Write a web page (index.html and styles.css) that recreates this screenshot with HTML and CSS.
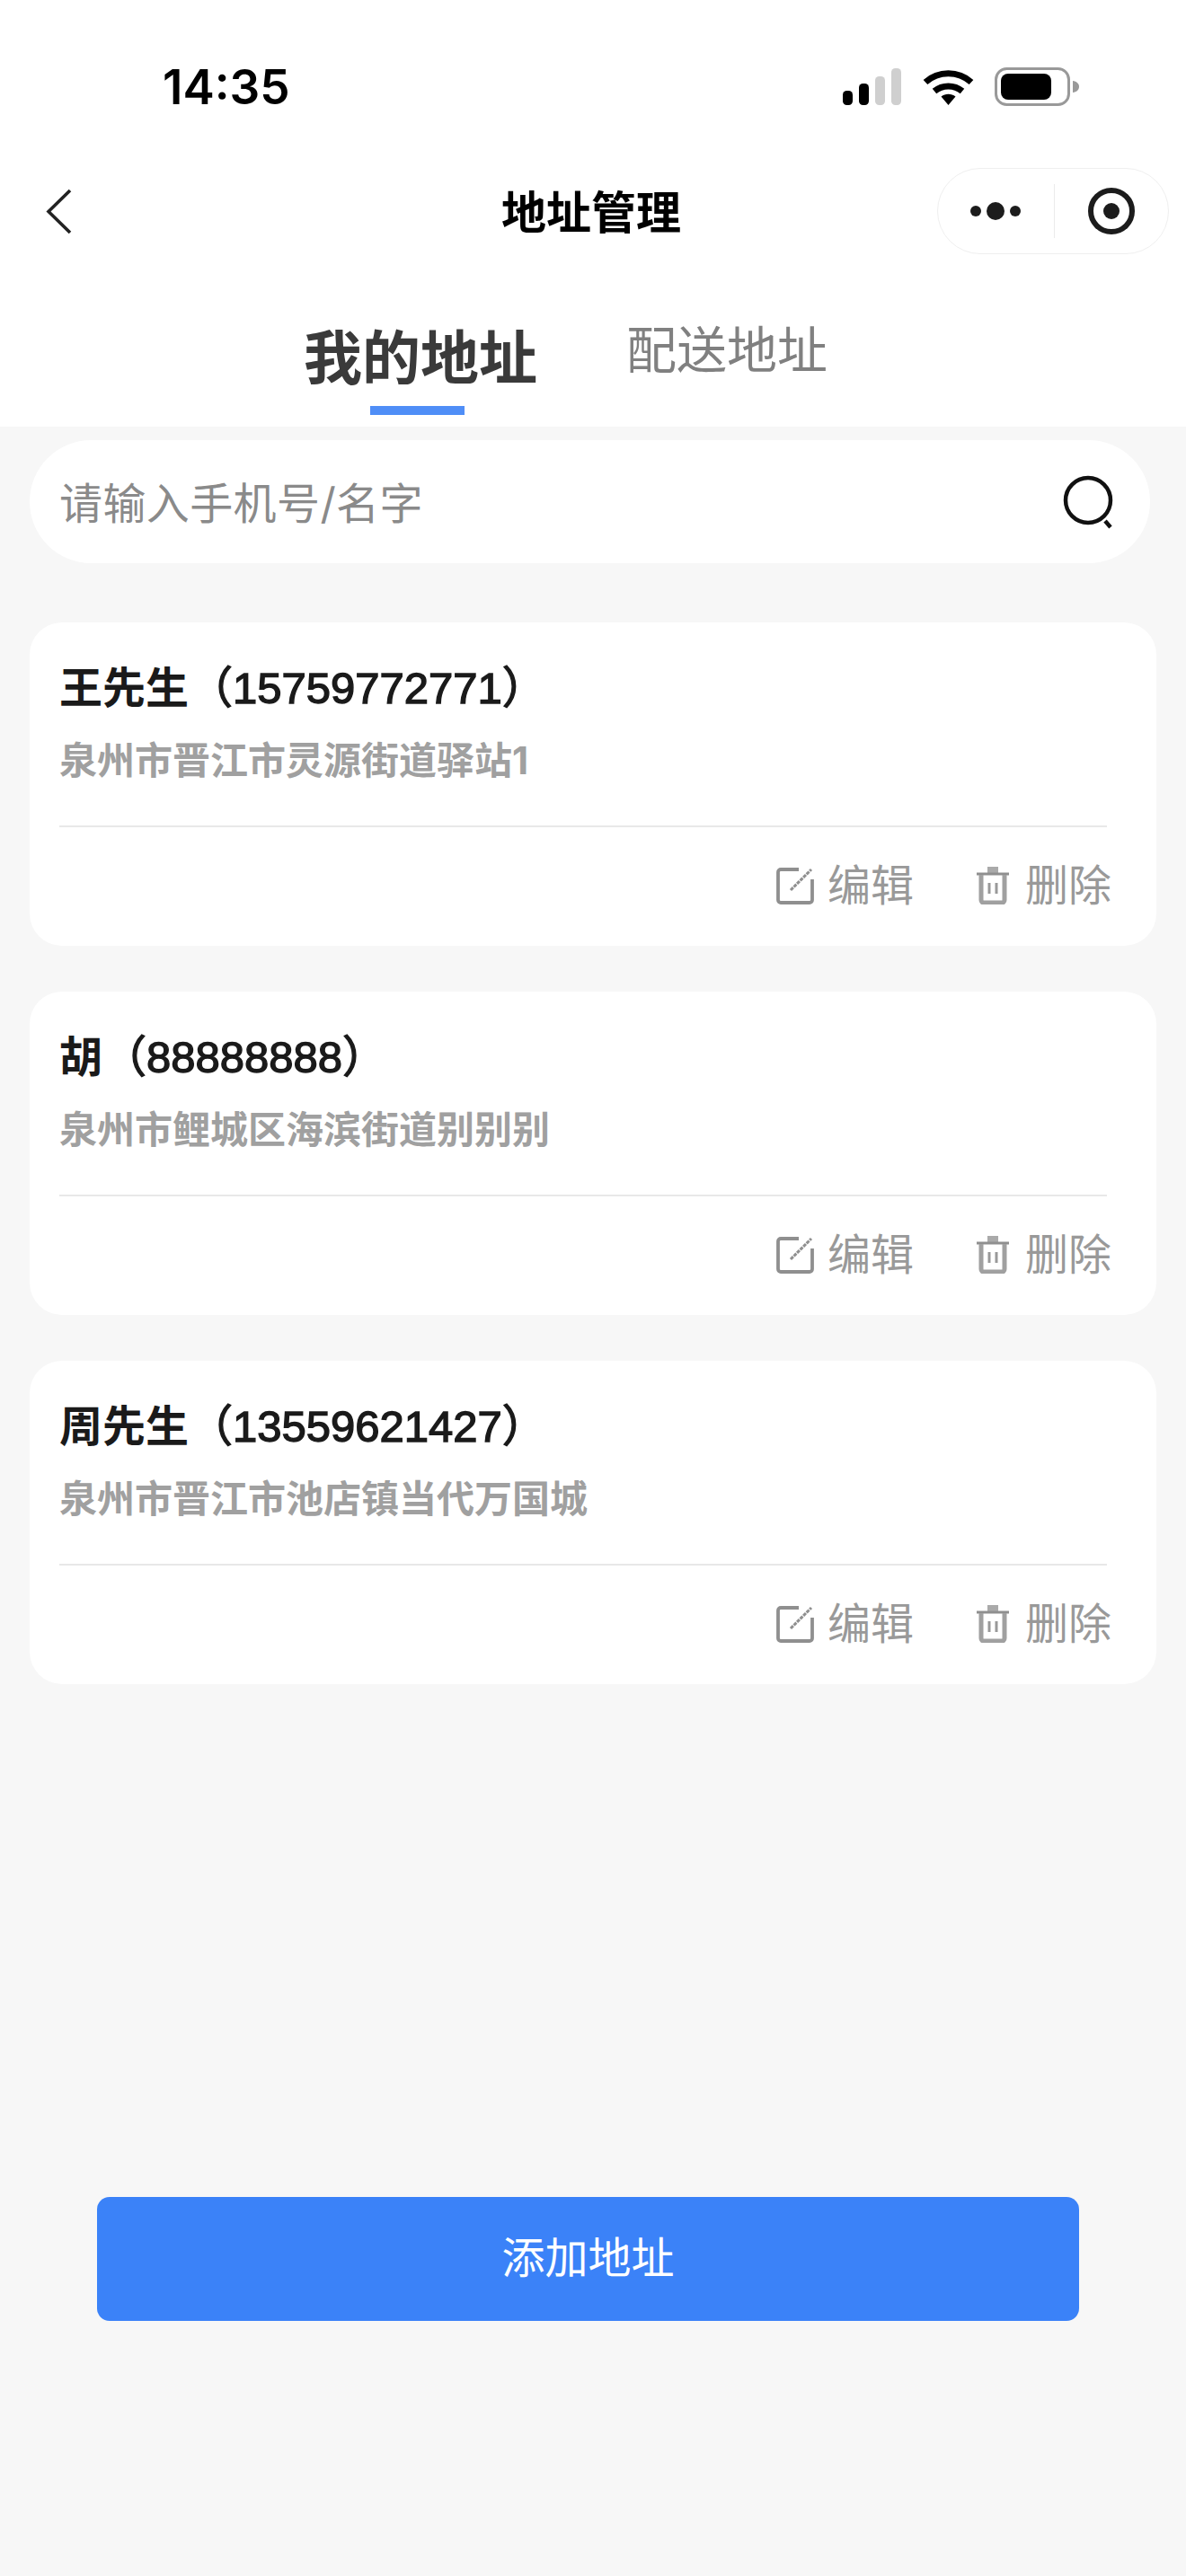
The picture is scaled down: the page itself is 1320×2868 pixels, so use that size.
FILE: index.html
```html
<!DOCTYPE html>
<html lang="zh-CN">
<head>
    <meta charset="UTF-8">
    <meta name="viewport" content="width=device-width, initial-scale=1.0">
    <title>地址管理</title>
    <link rel="stylesheet" href="styles.css">
</head>
<body>
    <header class="page-header">
        <div class="status-bar">
            <span class="status-time">14:35</span>
            <div class="status-icons">
                <svg class="icon-signal" viewBox="0 0 65 41">
                    <rect x="0" y="25" width="11" height="16" rx="4.5" fill="#000"/>
                    <rect x="18" y="17" width="11" height="24" rx="4.5" fill="#000"/>
                    <rect x="36" y="9" width="11" height="32" rx="4.5" fill="#cfcfcf"/>
                    <rect x="54" y="0" width="11" height="41" rx="4.5" fill="#cfcfcf"/>
                </svg>
                <svg class="icon-wifi" viewBox="0 0 57 42">
                    <path d="M28.5 42l-8-9.5c4.6-3.6 11.4-3.6 16 0z" fill="#000"/>
                    <path d="M3 16.500C17.500 3.500 39.500 3.500 54 16.500" fill="none" stroke="#000" stroke-width="7"/>
                    <path d="M13 26.500c9-7.500 22-7.500 31 0" fill="none" stroke="#000" stroke-width="7"/>
                </svg>
                <svg class="icon-battery" viewBox="0 0 94 43">
                    <rect x="1.500" y="1.500" width="81" height="40" rx="12" fill="none" stroke="#999" stroke-width="3"/>
                    <rect x="7" y="7" width="56" height="29" rx="8" fill="#000"/>
                    <path d="M87 15c4 .5 7 3 7 6.500s-3 6-7 6.500z" fill="#999"/>
                </svg>
            </div>
        </div>
        <nav class="nav-bar">
            <svg class="icon-back" viewBox="0 0 29 51">
                <path d="M27 2L3 25.500 27 49" fill="none" stroke="#222" stroke-width="3.600"/>
            </svg>
            <h1 class="nav-title">地址管理</h1>
            <div class="capsule">
                <svg class="icon-more" viewBox="0 0 56 20">
                    <circle cx="6" cy="10" r="6" fill="#1c1c1c"/>
                    <circle cx="28" cy="10" r="10" fill="#1c1c1c"/>
                    <circle cx="50" cy="10" r="6" fill="#1c1c1c"/>
                </svg>
                <span class="capsule-line"></span>
                <svg class="icon-target" viewBox="0 0 52 52">
                    <circle cx="26" cy="26" r="23" fill="none" stroke="#1c1c1c" stroke-width="6"/>
                    <circle cx="26" cy="26" r="9" fill="#1c1c1c"/>
                </svg>
            </div>
        </nav>
        <div class="tabs">
            <div class="tab tab-active">我的地址</div>
            <div class="tab">配送地址</div>
        </div>
    </header>

    <div class="search-box">
        <span class="search-text">请输入手机号/名字</span>
        <svg class="icon-search" viewBox="0 0 58 60">
            <circle cx="28" cy="28" r="25" fill="none" stroke="#111" stroke-width="4.500"/>
            <path d="M47 51l6 7" fill="none" stroke="#111" stroke-width="4.500"/>
        </svg>
    </div>

    <main class="address-list">
        <div class="address-card">
            <div class="address-name">王先生<span class="phone">（15759772771）</span></div>
            <div class="address-detail">泉州市晋江市灵源街道驿站1</div>
            <div class="address-actions">
                <div class="action">
                    <svg class="icon-edit" viewBox="0 0 42 42">
                        <path d="M25 3H5a3 3 0 0 0-3 3v31a3 3 0 0 0 3 3h32a3 3 0 0 0 3-3V14" fill="none" stroke="#8f8f8f" stroke-width="3.800"/>
                        <path d="M16 26L39 3" fill="none" stroke="#8f8f8f" stroke-width="3" stroke-dasharray="4 1"/>
                    </svg>
                    <span>编辑</span>
                </div>
                <div class="action action-delete">
                    <svg class="icon-trash" viewBox="0 0 36 42">
                        <rect x="12" y="0" width="12" height="7" fill="#aaa"/>
                        <path d="M0 8h36" fill="none" stroke="#8f8f8f" stroke-width="3"/>
                        <path d="M5 9v28a3 3 0 0 0 3 3h20a3 3 0 0 0 3-3V9" fill="none" stroke="#a0a0a0" stroke-width="5"/>
                        <path d="M14 18v12M22 18v12" fill="none" stroke="#999" stroke-width="3"/>
                    </svg>
                    <span>删除</span>
                </div>
            </div>
        </div>

        <div class="address-card">
            <div class="address-name">胡<span class="phone">（88888888）</span></div>
            <div class="address-detail">泉州市鲤城区海滨街道别别别</div>
            <div class="address-actions">
                <div class="action">
                    <svg class="icon-edit" viewBox="0 0 42 42">
                        <path d="M25 3H5a3 3 0 0 0-3 3v31a3 3 0 0 0 3 3h32a3 3 0 0 0 3-3V14" fill="none" stroke="#8f8f8f" stroke-width="3.800"/>
                        <path d="M16 26L39 3" fill="none" stroke="#8f8f8f" stroke-width="3" stroke-dasharray="4 1"/>
                    </svg>
                    <span>编辑</span>
                </div>
                <div class="action action-delete">
                    <svg class="icon-trash" viewBox="0 0 36 42">
                        <rect x="12" y="0" width="12" height="7" fill="#aaa"/>
                        <path d="M0 8h36" fill="none" stroke="#8f8f8f" stroke-width="3"/>
                        <path d="M5 9v28a3 3 0 0 0 3 3h20a3 3 0 0 0 3-3V9" fill="none" stroke="#a0a0a0" stroke-width="5"/>
                        <path d="M14 18v12M22 18v12" fill="none" stroke="#999" stroke-width="3"/>
                    </svg>
                    <span>删除</span>
                </div>
            </div>
        </div>

        <div class="address-card">
            <div class="address-name">周先生<span class="phone">（13559621427）</span></div>
            <div class="address-detail">泉州市晋江市池店镇当代万国城</div>
            <div class="address-actions">
                <div class="action">
                    <svg class="icon-edit" viewBox="0 0 42 42">
                        <path d="M25 3H5a3 3 0 0 0-3 3v31a3 3 0 0 0 3 3h32a3 3 0 0 0 3-3V14" fill="none" stroke="#8f8f8f" stroke-width="3.800"/>
                        <path d="M16 26L39 3" fill="none" stroke="#8f8f8f" stroke-width="3" stroke-dasharray="4 1"/>
                    </svg>
                    <span>编辑</span>
                </div>
                <div class="action action-delete">
                    <svg class="icon-trash" viewBox="0 0 36 42">
                        <rect x="12" y="0" width="12" height="7" fill="#aaa"/>
                        <path d="M0 8h36" fill="none" stroke="#8f8f8f" stroke-width="3"/>
                        <path d="M5 9v28a3 3 0 0 0 3 3h20a3 3 0 0 0 3-3V9" fill="none" stroke="#a0a0a0" stroke-width="5"/>
                        <path d="M14 18v12M22 18v12" fill="none" stroke="#999" stroke-width="3"/>
                    </svg>
                    <span>删除</span>
                </div>
            </div>
        </div>
    </main>

    <button class="add-btn">添加地址</button>
</body>
</html>
```

FILE: styles.css
```css
* {
    margin: 0;
    padding: 0;
    box-sizing: border-box;
}

body {
    font-family: 'Inter', 'Noto Sans CJK SC', sans-serif;
    background: #f7f7f7;
    min-height: 100vh;
}

.page-header {
    background: white;
    height: 475px;
}

.status-bar {
    height: 187px;
    padding: 65px 119px 0 181px;
    display: flex;
    justify-content: space-between;
    align-items: flex-start;
}

.status-time {
    font-size: 53px;
    line-height: 64px;
    font-weight: 600;
    color: #000;
}

.status-icons {
    display: flex;
    align-items: flex-start;
    padding-top: 10px;
}

.icon-signal {
    width: 65px;
    height: 41px;
    margin-top: 1px;
    margin-right: 24px;
}

.icon-wifi {
    width: 57px;
    height: 42px;
    margin-right: 23px;
}

.icon-battery {
    width: 94px;
    height: 43px;
}

.nav-bar {
    height: 96px;
    padding: 0 19px 0 51px;
    display: flex;
    align-items: center;
    justify-content: space-between;
}

.icon-back {
    width: 29px;
    height: 51px;
}

.nav-title {
    font-size: 50px;
    font-weight: 700;
    color: #000;
    margin-left: 193px;
    padding-bottom: 4px;
}

.capsule {
    width: 258px;
    height: 96px;
    border: 1px solid #efefef;
    border-radius: 48px;
    padding-left: 36px;
    display: flex;
    align-items: center;
}

.icon-more {
    width: 56px;
    height: 20px;
}

.capsule-line {
    width: 1px;
    height: 60px;
    background: #ebebeb;
    margin: 0 37px;
}

.icon-target {
    width: 52px;
    height: 52px;
}

.tabs {
    display: flex;
    align-items: flex-start;
    padding-left: 338px;
    gap: 99px;
    padding-top: 74px;
}

.tab {
    font-size: 56px;
    line-height: 66px;
    color: #808080;
}

.tab-active {
    position: relative;
    top: 1px;
    font-size: 65px;
    line-height: 82px;
    font-weight: 700;
    color: #3a3a3a;
}

.tab-active::after {
    content: '';
    position: absolute;
    left: 74px;
    bottom: -22px;
    width: 105px;
    height: 10px;
    background: #4f8ef7;
}

.search-box {
    margin: 15px 40px 0 33px;
    height: 137px;
    border-radius: 69px;
    background: white;
    padding: 0 39px 0 33px;
    display: flex;
    align-items: center;
    justify-content: space-between;
}

.search-text {
    font-size: 48px;
    letter-spacing: 0.4px;
    color: #8a8a8a;
    padding-bottom: 4px;
}

.icon-search {
    width: 58px;
    height: 60px;
}

.address-list {
    margin: 66px 33px 0;
    display: flex;
    flex-direction: column;
    gap: 51px;
}

.address-card {
    height: 360px;
    background: white;
    border-radius: 36px;
    padding: 44px 55px 0 33px;
}

.address-name {
    font-size: 48px;
    line-height: 58px;
    font-weight: 600;
    color: #1a1a1a;
}

.phone {
    font-family: 'Liberation Sans', 'Noto Sans CJK SC', sans-serif;
    font-size: 49px;
    font-weight: 400;
    -webkit-text-stroke: 1.4px #1a1a1a;
    text-spacing-trim: space-all;
}

.address-detail {
    font-size: 42px;
    line-height: 52px;
    font-weight: 700;
    color: #a0a0a0;
    margin-top: 26px;
}

.address-actions {
    margin-top: 46px;
    border-top: 2px solid #e8e8e8;
    padding-top: 37px;
    display: flex;
    justify-content: flex-end;
}

.action {
    display: flex;
    align-items: center;
    font-size: 48px;
    line-height: 56px;
    color: #999;
    margin-right: -5px;
}

.action-delete {
    margin-left: 75px;
}

.icon-edit {
    width: 42px;
    height: 42px;
    margin-right: 15px;
}

.icon-trash {
    width: 36px;
    height: 42px;
    margin-right: 18px;
}

.add-btn {
    display: block;
    width: 1093px;
    height: 138px;
    margin: 571px 0 0 108px;
    padding-bottom: 10px;
    border: none;
    border-radius: 14px;
    background: #3b82f8;
    color: white;
    font-family: inherit;
    font-size: 48px;
}
```
